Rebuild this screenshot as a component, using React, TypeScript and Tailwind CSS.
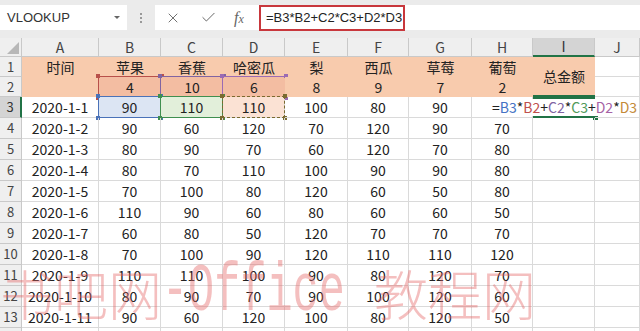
import React from 'react';
import { X, Check } from 'lucide-react';

const font = { fontFamily: '"Noto Sans CJK SC", "Noto Sans", sans-serif' };

const heads = ['苹果', '香蕉', '哈密瓜', '梨', '西瓜', '草莓', '葡萄'];
const prices = [4, 10, 6, 8, 9, 7, 2];
const rows: (number | null)[][] = [
  [90, 110, 110, 100, 80, 90, null],
  [90, 60, 120, 70, 120, 90, 70],
  [80, 90, 70, 60, 120, 70, 80],
  [80, 70, 110, 100, 90, 90, 80],
  [70, 100, 80, 120, 60, 50, 80],
  [110, 90, 60, 80, 60, 60, 50],
  [60, 80, 50, 120, 70, 70, 70],
  [70, 100, 90, 120, 110, 110, 120],
  [110, 110, 100, 90, 80, 120, 70],
  [80, 90, 70, 90, 100, 120, 60],
  [90, 60, 120, 100, 80, 120, 50],
];

const letters = ['A', 'B', 'C', 'D', 'E', 'F', 'G', 'H', 'I', 'J'];

// coloured borders of the cells named in the formula
function RefBox({ color, dashed }: { color: string; dashed?: boolean }) {
  return (
    <div className="pointer-events-none absolute -left-px -top-px -right-px -bottom-px">
      <div
        className={`absolute inset-0 border-[1.5px] ${dashed ? 'border-dashed' : 'border-solid'}`}
        style={{ borderColor: color }}
      />
      <div className="absolute -left-[2px] -top-[2px] h-[4px] w-[4px]" style={{ background: color }} />
      <div className="absolute -right-[2px] -top-[2px] h-[4px] w-[4px]" style={{ background: color }} />
      <div className="absolute -left-[2px] -bottom-[2px] h-[4px] w-[4px]" style={{ background: color }} />
      <div className="absolute -right-[2px] -bottom-[2px] h-[4px] w-[4px]" style={{ background: color }} />
    </div>
  );
}

const cell = 'relative flex items-center justify-center border-r border-b border-[#dadada] text-[14px] text-[#222]';
const hdr = 'flex items-center justify-center border-r border-b border-[#c9c9c9] bg-[#efefef] text-[#444]';

export default function App() {
  return (
    <div className="relative h-[331px] w-[640px] overflow-hidden bg-white" style={font}>
      {/* toolbar */}
      <div className="flex h-[38px] items-start bg-[#ebebeb] pt-[5px]">
        <div className="flex h-[25px] w-[127px] items-center justify-between bg-white pl-[7px] pr-[6px]">
          <span className="text-[13px] text-[#333]" style={{ fontFamily: '"Liberation Sans", sans-serif' }}>VLOOKUP</span>
          <svg width="8" height="5" viewBox="0 0 8 5"><path d="M1 1 L4 4 L7 1 Z" fill="#666" /></svg>
        </div>
        <div className="flex h-[25px] w-[28px] flex-col items-center justify-center gap-[2px]">
          <div className="h-[2px] w-[2px] bg-[#999]" />
          <div className="h-[2px] w-[2px] bg-[#999]" />
          <div className="h-[2px] w-[2px] bg-[#999]" />
        </div>
        <div className="flex h-[25px] flex-1 items-center bg-white">
          <div className="flex w-[104px] items-center text-[#666]">
            <X size={16} strokeWidth={1.4} className="ml-[10px]" />
            <Check size={17} strokeWidth={1.4} className="ml-[19px]" />
            <span className="ml-[17px] text-[16px] italic" style={{ fontFamily: '"Liberation Serif", serif' }}>
              f<span className="text-[12px]">x</span>
            </span>
          </div>
          <div className="flex h-[26px] w-[146px] items-center border-2 border-[#c8373c] pl-[5px] text-[13px] text-[#222]" style={{ fontFamily: '"Liberation Sans", sans-serif' }}>
            =B3*B2+C2*C3+D2*D3
          </div>
        </div>
      </div>

      {/* sheet */}
      <div className="grid grid-cols-[22px_77px_62px_62px_62px_63px_61px_63px_61px_62px_1fr] grid-rows-[19px_20px_20px_repeat(11,21px)_20px]">
        <div className="relative border-r border-b border-[#c9c9c9] bg-[#efefef]">
          <svg className="absolute bottom-[2px] right-[2px]" width="12" height="12" viewBox="0 0 12 12">
            <path d="M12 0 L12 12 L0 12 Z" fill="#b7b7b7" />
          </svg>
        </div>
        {letters.map((l) =>
          l === 'I' ? (
            <div key={l} className="flex items-center justify-center border-r border-b-2 border-r-[#c9c9c9] border-b-[#217346] bg-[#d4d4d4] text-[14px] text-[#333]">{l}</div>
          ) : (
            <div key={l} className={`${hdr} text-[14px]`}>{l}</div>
          )
        )}

        {/* row 1 */}
        <div className={`${hdr} text-[13px]`}>1</div>
        <div className="flex items-center justify-center bg-[#f8cbad] text-[14px] text-[#222]">时间</div>
        {heads.map((h) => (
          <div key={h} className="flex items-center justify-center bg-[#f8cbad] text-[14px] text-[#222]">{h}</div>
        ))}
        <div className="row-span-2 flex items-center justify-center border-b-2 border-[#217346] bg-[#f8cbad] text-[14px] text-[#222]">总金额</div>
        <div className={cell} />

        {/* row 2 */}
        <div className={`${hdr} text-[13px]`}>2</div>
        <div className="bg-[#f8cbad]" />
        {prices.map((p, i) => (
          <div key={i} className={`relative flex items-center justify-center text-[14px] text-[#222] ${i < 3 ? 'bg-[#f3bda2]' : 'bg-[#f8cbad]'}`}>
            {p}
            {i === 0 && <RefBox color="#b8504a" />}
            {i === 1 && <RefBox color="#8064a2" />}
            {i === 2 && <RefBox color="#9b6bb3" />}
          </div>
        ))}
        <div className={cell} />

        {/* data rows */}
        {rows.map((r, ri) => (
          <React.Fragment key={ri}>
            {ri === 0 ? (
              <div className="flex items-center justify-center border-r-2 border-b border-r-[#217346] border-b-[#c9c9c9] bg-[#d4d4d4] text-[13px] text-[#333]">3</div>
            ) : (
              <div className={`${hdr} text-[13px]`}>{ri + 3}</div>
            )}
            <div className={cell}>2020-1-{ri + 1}</div>
            {r.map((v, ci) => {
              let bg = '';
              if (ri === 0 && ci === 0) bg = 'bg-[#dce5f3]';
              if (ri === 0 && ci === 1) bg = 'bg-[#e2efda]';
              if (ri === 0 && ci === 2) bg = 'bg-[#fbe2d4]';
              return (
                <div key={ci} className={`${cell} ${bg}`}>
                  {v}
                  {ri === 0 && ci === 0 && <RefBox color="#4a72b8" />}
                  {ri === 0 && ci === 1 && <RefBox color="#3f8f4f" />}
                  {ri === 0 && ci === 2 && <RefBox color="#7a6a30" dashed />}
                </div>
              );
            })}
            {ri === 0 ? (
              <div className="relative border-y-2 border-[#217346]">
                <div className="absolute -right-[3px] -bottom-[4px] h-[5px] w-[5px] bg-[#217346]" />
                <div className="absolute -left-[40px] top-0 flex h-full w-[144px] items-center justify-center bg-white text-[14px] text-[#222]">
                  <span>=</span>
                  <span className="text-[#4472c4]">B3</span>
                  <span>*</span>
                  <span className="text-[#c0504d]">B2</span>
                  <span>+</span>
                  <span className="text-[#8064a2]">C2</span>
                  <span>*</span>
                  <span className="text-[#4f9a5a]">C3</span>
                  <span>+</span>
                  <span className="text-[#a662a6]">D2</span>
                  <span>*</span>
                  <span className="text-[#c48a38]">D3</span>
                  <span className="ml-[1px] h-[16px] w-px bg-black" />
                </div>
              </div>
            ) : (
              <div className={cell} />
            )}
            <div className={cell} />
          </React.Fragment>
        ))}
        <div className={`${hdr} text-[13px]`}>14</div>
        {letters.map((l) => (
          <div key={l} className={cell} />
        ))}
      </div>

      {/* watermark */}
      <div
        className="pointer-events-none absolute left-0 top-[266px] flex items-start whitespace-nowrap text-[54px] leading-none text-[rgba(228,96,96,0.4)]"
        style={{ fontFamily: '"Noto Sans CJK SC", sans-serif', fontWeight: 300 }}
      >
        <span>书吧网</span>
        <span className="relative -mt-[8px] inline-block h-[68px] w-[182px]">
          <span
            className="absolute left-0 top-0 origin-left scale-x-[0.64] text-[68px] leading-none"
            style={{ fontFamily: '"Liberation Mono", monospace' }}
          >
            -Office
          </span>
        </span>
        <span className="ml-[30px]">教程网</span>
      </div>
    </div>
  );
}
